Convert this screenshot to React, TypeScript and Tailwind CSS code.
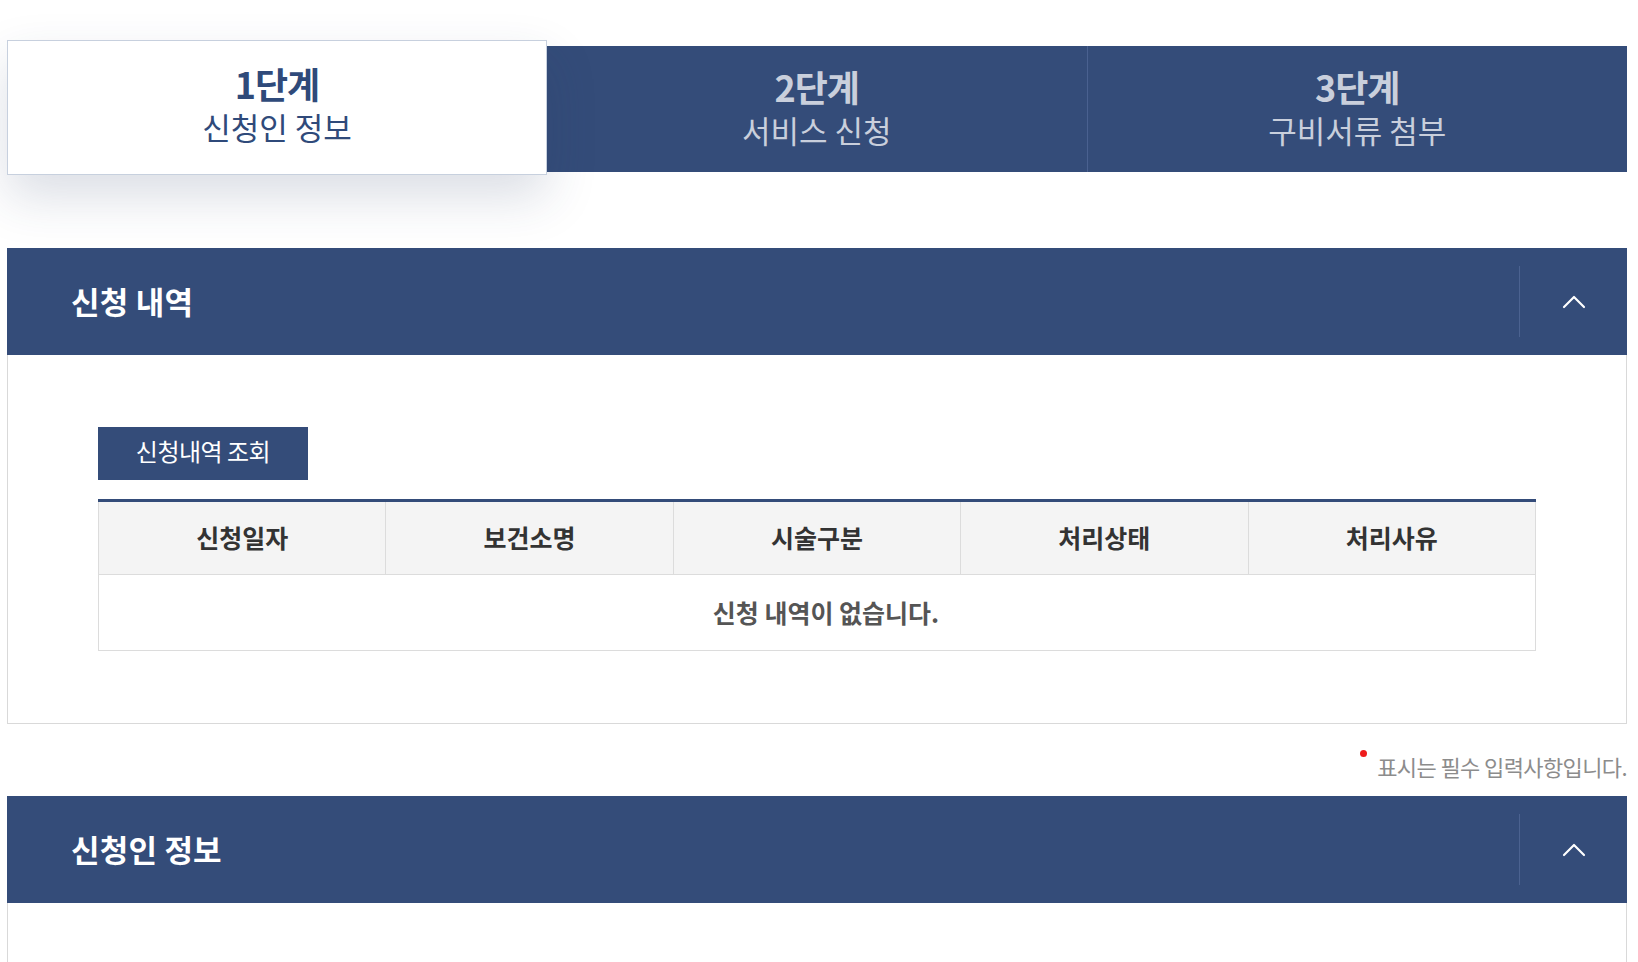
import { ChevronUp } from 'lucide-react';

const steps = [
  { step: '1단계', label: '신청인 정보' },
  { step: '2단계', label: '서비스 신청' },
  { step: '3단계', label: '구비서류 첨부' },
];

const columns = ['신청일자', '보건소명', '시술구분', '처리상태', '처리사유'];

function SectionHeader({ title }: { title: string }) {
  return (
    <div className="flex h-[107px] items-center bg-[#344c79]">
      <h2 className="flex-1 pl-[64px] text-[31px] font-bold tracking-[0.2px] text-white">{title}</h2>
      <div className="h-[71px] w-px bg-[#4b6290]" />
      <button className="flex h-full w-[107px] items-center justify-center text-white">
        <ChevronUp className="size-[40px]" strokeWidth={1.3} />
      </button>
    </div>
  );
}

export default function App() {
  return (
    <div className="min-h-screen bg-white font-['Noto_Sans_CJK_KR','Noto_Sans',sans-serif] text-[#333]">
      <div className="ml-[7px] w-[1620px] pt-[40px]">
        <div className="flex h-[135px] items-start">
          {steps.map((s, i) =>
            i === 0 ? (
              <div
                key={s.step}
                className="relative z-10 flex h-[135px] w-[540px] flex-col items-center justify-center border border-[#c7d0de] bg-white pb-[6px] shadow-[0_22px_50px_rgba(40,60,100,0.17)]"
              >
                <span className="text-[36px] leading-[40px] font-bold tracking-[-1px] text-[#2f4a7a]">{s.step}</span>
                <span className="mt-[4px] text-[31px] leading-[40px] text-[#2f4a7a]">{s.label}</span>
              </div>
            ) : (
              <div
                key={s.step}
                className={`mt-[6px] flex h-[126px] flex-1 flex-col items-center justify-center bg-[#344c79] pb-[2px] ${i === 2 ? 'border-l border-[#4a6190]' : ''}`}
              >
                <span className="text-[36px] leading-[40px] font-bold tracking-[-1px] text-[#c9cfdc]">{s.step}</span>
                <span className="mt-[4px] text-[31px] leading-[40px] text-[#c9cfdc]">{s.label}</span>
              </div>
            ),
          )}
        </div>

        <section className="mt-[73px]">
          <SectionHeader title="신청 내역" />
          <div className="border-x border-b border-[#d9d9d9] px-[90px] pt-[72px] pb-[72px]">
            <button className="h-[53px] w-[210px] bg-[#344c79] pb-[6px] text-[24px] tracking-[-0.5px] text-white">
              신청내역 조회
            </button>
            <table className="mt-[19px] w-full table-fixed border-collapse border-t-[3px] border-[#344c79]">
              <thead>
                <tr className="h-[74px] bg-[#f4f4f4]">
                  {columns.map((c, i) => (
                    <th
                      key={c}
                      className={`border-b border-[#dcdcdc] text-[25px] font-bold text-[#333] ${i === 0 ? 'border-l' : ''} border-r`}
                    >
                      {c}
                    </th>
                  ))}
                </tr>
              </thead>
              <tbody>
                <tr className="h-[76px]">
                  <td
                    colSpan={5}
                    className="border-x border-b border-[#dcdcdc] pl-[18px] text-center text-[25px] font-bold text-[#555]"
                  >
                    신청 내역이 없습니다.
                  </td>
                </tr>
              </tbody>
            </table>
          </div>
        </section>

        <div className="flex h-[72px] items-start justify-end pt-[27px]">
          <span className="-mt-[1px] mr-[10px] size-[7px] rounded-full bg-[#ee1c1c]" />
          <span className="text-[22px] leading-[30px] tracking-[-0.6px] text-[#8c8c8c]">표시는 필수 입력사항입니다.</span>
        </div>

        <section>
          <SectionHeader title="신청인 정보" />
          <div className="h-[100px] border-x border-[#d9d9d9]" />
        </section>
      </div>
    </div>
  );
}
